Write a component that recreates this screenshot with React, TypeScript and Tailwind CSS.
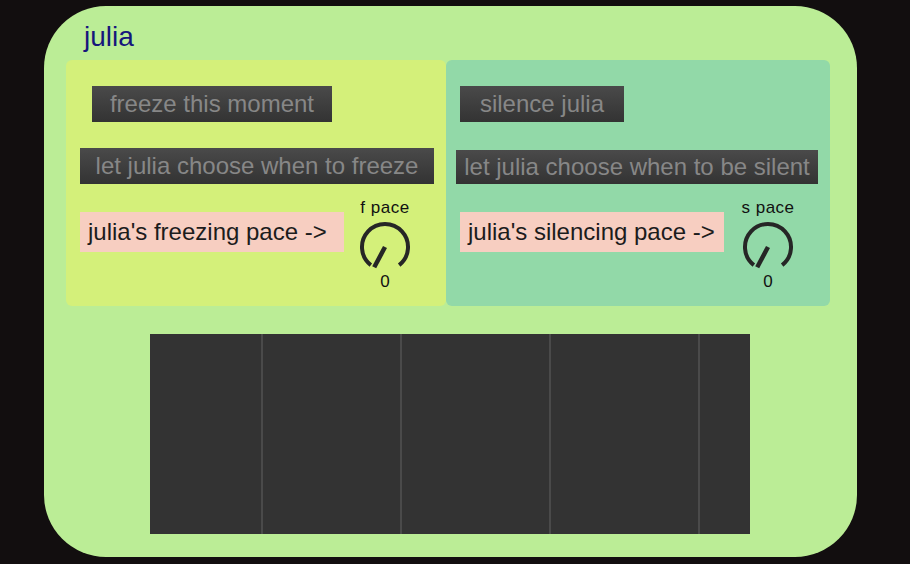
import React from 'react';

// small knob in the style of a Max live.dial, sitting at value 0
const Knob: React.FC<{ label: string; value: number }> = ({ label, value }) => {
  const r = 23;
  const cx = 28;
  const cy = 28;
  const pt = (deg: number, rad: number) => {
    const a = (deg * Math.PI) / 180;
    return [cx + rad * Math.cos(a), cy + rad * Math.sin(a)];
  };
  const [sx, sy] = pt(128, r);
  const [ex, ey] = pt(52, r);
  const [nx, ny] = pt(118, r);
  const [bx, by] = pt(118, 0);
  return (
    <div className="flex flex-col items-center w-[60px]">
      <span className="text-[17px] leading-[20px] text-[#111] tracking-[0.5px]">{label}</span>
      <svg width="56" height="56" viewBox="0 0 56 56" className="mt-px">
        <path
          d={`M ${sx} ${sy} A ${r} ${r} 0 1 1 ${ex} ${ey}`}
          fill="none"
          stroke="#262626"
          strokeWidth="4"
        />
        <line x1={bx} y1={by} x2={nx} y2={ny} stroke="#262626" strokeWidth="4.5" strokeLinecap="butt" />
      </svg>
      <span className="text-[17px] leading-[20px] text-[#111] -mt-[3px]">{value}</span>
    </div>
  );
};

const DarkButton: React.FC<{ text: string; className: string }> = ({ text, className }) => (
  <div
    className={`flex items-center justify-center bg-linear-to-b from-[#4a4a4a] to-[#333333] text-[#878787] text-[24px] leading-none whitespace-nowrap ${className}`}
  >
    {text}
  </div>
);

const PaceLabel: React.FC<{ text: string }> = ({ text }) => (
  <div className="mt-[14px] w-[264px] h-[40px] bg-[#f7cec1] text-[#1c1c1c] text-[24px] leading-none flex items-center pl-[8px] whitespace-nowrap">
    {text}
  </div>
);

export default function App() {
  return (
    <div
      className="w-[910px] h-[564px] bg-[#120e0f] pt-[6px] pl-[44px]"
      style={{ fontFamily: '"Liberation Sans", Arial, sans-serif' }}
    >
      <div className="w-[813px] h-[551px] rounded-[62px] bg-[#bbed96] flex flex-col">
        <div className="pl-[40px] pt-[15px] h-[54px] text-[28px] leading-[32px] text-[#16167c]">julia</div>

        <div className="flex pl-[22px]">
          {/* freeze panel */}
          <div className="w-[380px] h-[246px] bg-[#d4f07a] rounded-[6px] flex flex-col pl-[14px] pt-[26px]">
            <DarkButton text="freeze this moment" className="ml-[12px] w-[240px] h-[36px]" />
            <DarkButton text="let julia choose when to freeze" className="mt-[26px] w-[354px] h-[36px]" />
            <div className="flex items-start mt-[14px]">
              <PaceLabel text="julia's freezing pace ->" />
              <div className="ml-[11px]">
                <Knob label="f pace" value={0} />
              </div>
            </div>
          </div>

          {/* silence panel */}
          <div className="w-[384px] h-[246px] bg-[#92d9a8] rounded-[6px] flex flex-col pl-[10px] pt-[26px]">
            <DarkButton text="silence julia" className="ml-[4px] w-[164px] h-[36px]" />
            <DarkButton text="let julia choose when to be silent" className="mt-[28px] w-[362px] h-[34px]" />
            <div className="flex items-start mt-[14px] pl-[4px]">
              <PaceLabel text="julia's silencing pace ->" />
              <div className="ml-[14px]">
                <Knob label="s pace" value={0} />
              </div>
            </div>
          </div>
        </div>

        {/* dark display area */}
        <div className="mt-[28px] ml-[106px] w-[600px] h-[200px] bg-[#333333] flex">
          <div className="w-[111px] h-full" />
          <div className="w-[139px] h-full border-l-2 border-[#4a4a4a]" />
          <div className="w-[149px] h-full border-l-2 border-[#4a4a4a]" />
          <div className="w-[149px] h-full border-l-2 border-[#4a4a4a]" />
          <div className="flex-1 h-full border-l-2 border-[#4a4a4a]" />
        </div>
      </div>
    </div>
  );
}
